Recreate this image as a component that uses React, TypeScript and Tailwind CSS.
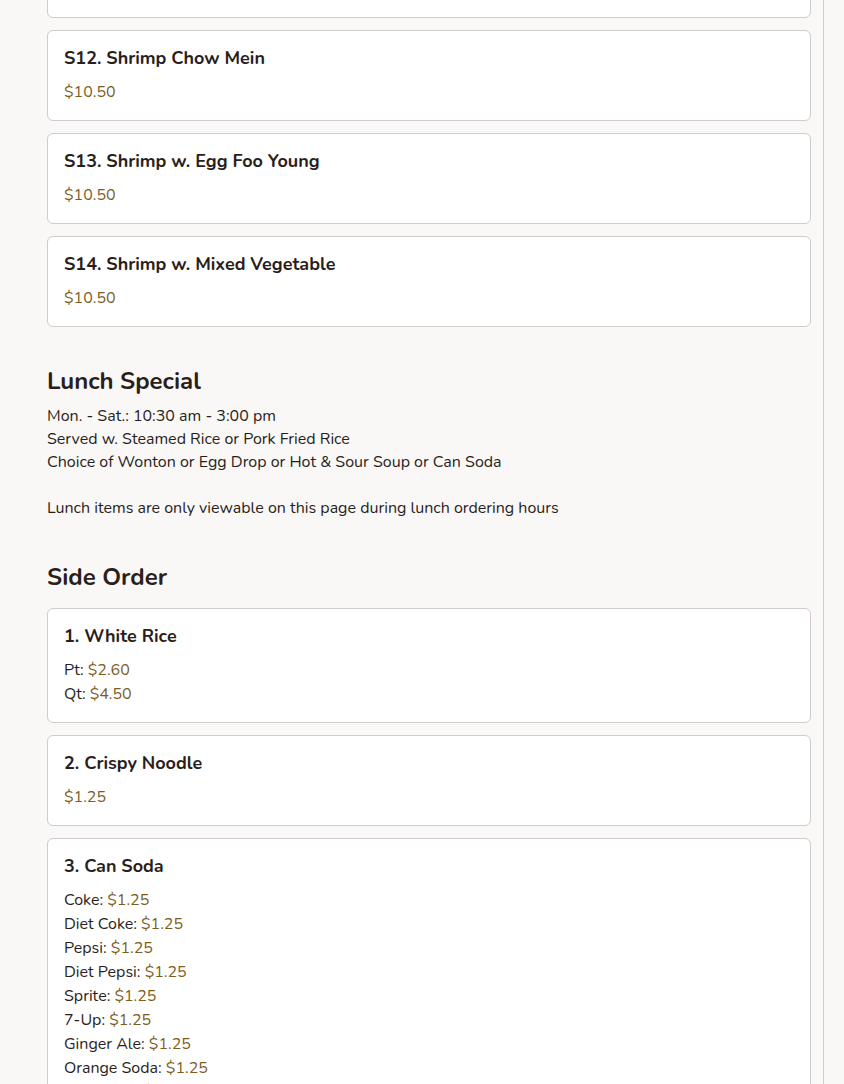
import React from "react";

type Line = { label?: string; price: string };
type Item = { name: string; lines: Line[] };

const shrimp: Item[] = [
  { name: "S11. Shrimp w. Broccoli", lines: [{ price: "$10.50" }] },
  { name: "S12. Shrimp Chow Mein", lines: [{ price: "$10.50" }] },
  { name: "S13. Shrimp w. Egg Foo Young", lines: [{ price: "$10.50" }] },
  { name: "S14. Shrimp w. Mixed Vegetable", lines: [{ price: "$10.50" }] },
];

const sides: Item[] = [
  {
    name: "1. White Rice",
    lines: [
      { label: "Pt", price: "$2.60" },
      { label: "Qt", price: "$4.50" },
    ],
  },
  { name: "2. Crispy Noodle", lines: [{ price: "$1.25" }] },
  {
    name: "3. Can Soda",
    lines: [
      { label: "Coke", price: "$1.25" },
      { label: "Diet Coke", price: "$1.25" },
      { label: "Pepsi", price: "$1.25" },
      { label: "Diet Pepsi", price: "$1.25" },
      { label: "Sprite", price: "$1.25" },
      { label: "7-Up", price: "$1.25" },
      { label: "Ginger Ale", price: "$1.25" },
      { label: "Orange Soda", price: "$1.25" },
      { label: "Root Beer", price: "$1.25" },
    ],
  },
];

function MenuCard({ item }: { item: Item }) {
  return (
    <div className="bg-white border border-[#cfcccb] rounded-md px-4 pt-[13px] pb-4">
      <h3 className="text-[18px] leading-[28px] font-bold text-[#2a1e1b]">{item.name}</h3>
      <div className="mt-[8px]">
        {item.lines.map((l, i) => (
          <p key={i} className="text-[16px] leading-[24px] text-[#2a1e1b]">
            {l.label && <span>{l.label}: </span>}
            <span className="text-[#7d5d1f]">{l.price}</span>
          </p>
        ))}
      </div>
    </div>
  );
}

export default function App() {
  return (
    <div
      className="min-h-screen bg-[#f9f8f7] text-[#2a1e1b] overflow-hidden"
      style={{ fontFamily: "Nunito, Lato, 'Open Sans', sans-serif" }}
    >
      <div className="w-[824px] border-r border-[#cfcccb] pl-[47px] pr-[12px] min-h-screen">
        <div className="-mt-[73px] flex flex-col gap-3">
          {shrimp.map((it) => (
            <MenuCard key={it.name} item={it} />
          ))}
        </div>

        <h2 className="mt-[38px] text-[24px] leading-[32px] font-bold">Lunch Special</h2>
        <div className="mt-[8px] text-[16px] leading-[23px]">
          <p>Mon. - Sat.: 10:30 am - 3:00 pm</p>
          <p>Served w. Steamed Rice or Pork Fried Rice</p>
          <p>Choice of Wonton or Egg Drop or Hot &amp; Sour Soup or Can Soda</p>
          <p className="mt-[23px]">Lunch items are only viewable on this page during lunch ordering hours</p>
        </div>

        <h2 className="mt-[41px] text-[24px] leading-[32px] font-bold">Side Order</h2>
        <div className="mt-[15px] flex flex-col gap-3 pb-8">
          {sides.map((it) => (
            <MenuCard key={it.name} item={it} />
          ))}
        </div>
      </div>
    </div>
  );
}
